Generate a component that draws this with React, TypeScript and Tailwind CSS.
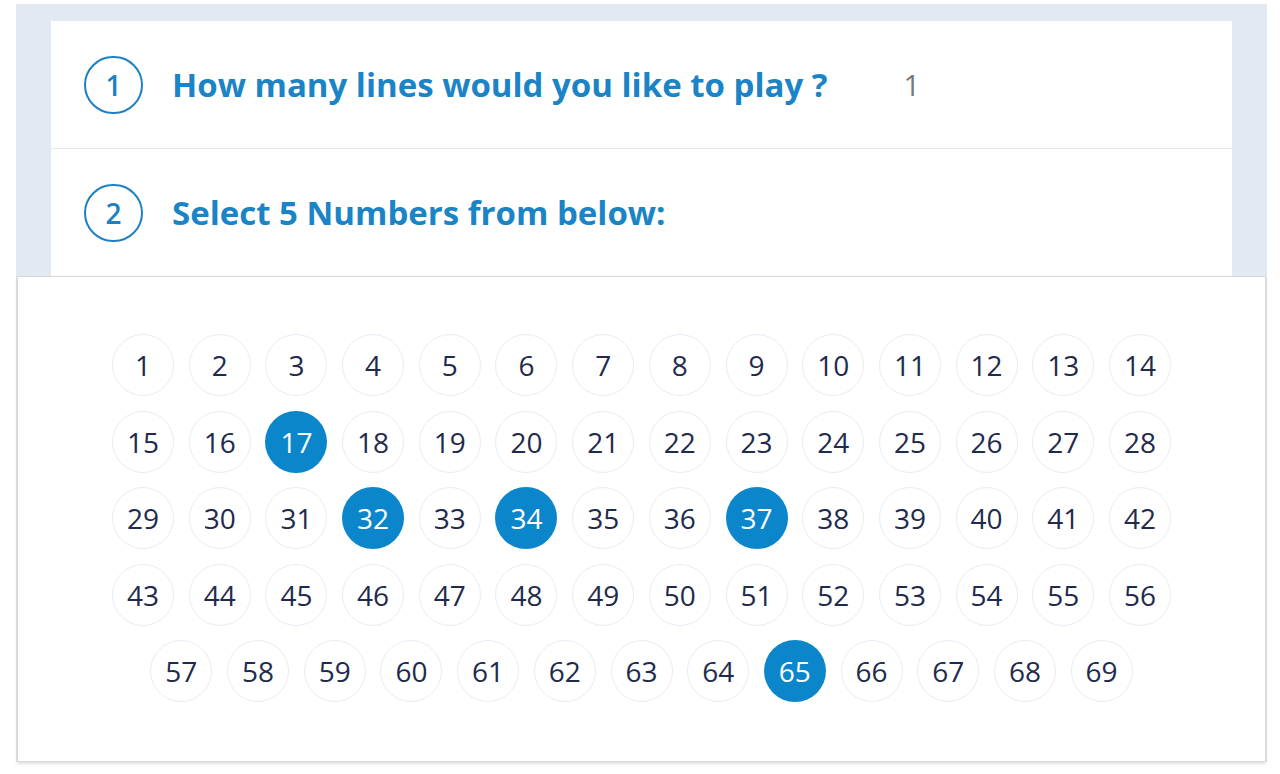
import React from "react";

const selected = [17, 32, 34, 37, 65];
const numbers = Array.from({ length: 69 }, (_, i) => i + 1);

const Step: React.FC<{ n: number; title: string; children?: React.ReactNode }> = ({
  n,
  title,
  children,
}) => (
  <div className="flex items-center h-[127px] pl-[33px]">
    <div className="w-[59px] h-[58px] rounded-full border-[2.5px] border-[#1f80c2] flex items-center justify-center text-[#1f80c2] text-[28px] font-semibold">
      {n}
    </div>
    <div className="ml-[29px] text-[#1b84c6] text-[33px] font-bold">
      {title}
    </div>
    {children}
  </div>
);

const App: React.FC = () => {
  return (
    <div
      className="w-[1280px] h-[774px] bg-white pt-1"
      style={{ fontFamily: '"Open Sans", "Noto Sans", sans-serif' }}
    >
      <div className="ml-4 w-[1251px] bg-[#e3e9f0] pt-[17px]">
        {/* Steps card */}
        <div className="mx-[35px] bg-white">
          <Step n={1} title="How many lines would you like to play ?">
            <span className="ml-[76px] text-[#777] text-[29px]">1</span>
          </Step>
          <div className="border-t border-[#e6e9ee]" />
          <Step n={2} title="Select 5 Numbers from below:" />
        </div>

        {/* Number picker */}
        <div className="mx-px bg-white border border-[#d6d9de] shadow-[0_2px_3px_rgba(0,0,0,0.12)] pt-[57px] pb-[59px]">
          <div className="w-[1100px] mx-auto flex flex-wrap justify-center gap-x-[14.7px] gap-y-[14.5px]">
            {numbers.map((num) => {
              const on = selected.includes(num);
              return (
                <div
                  key={num}
                  className={
                    on
                      ? "w-[62px] h-[62px] rounded-full bg-[#0b86cb] text-white flex items-center justify-center text-[28px] font-medium"
                      : "w-[62px] h-[62px] rounded-full border border-[#e6edf4] text-[#1f2b4d] flex items-center justify-center text-[28px] font-medium"
                  }
                >
                  {num}
                </div>
              );
            })}
          </div>
        </div>
      </div>
    </div>
  );
};

export default App;
